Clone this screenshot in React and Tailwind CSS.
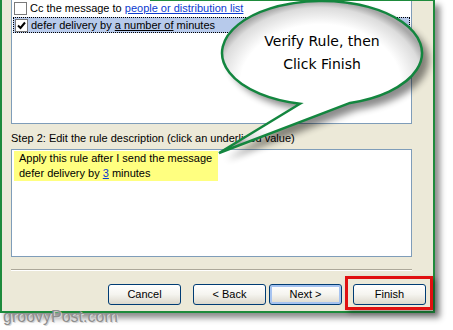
import React from 'react';

const Box = ({ checked }) => (
  <span className="w-[13px] h-[13px] shrink-0 border border-[#7a7a7a] bg-white flex items-center justify-center">
    {checked && (
      <svg width="11" height="11" viewBox="0 0 11 11">
        <path d="M2 5.5 L4.5 8 L9 2.5" fill="none" stroke="#000" strokeWidth="2" />
      </svg>
    )}
  </span>
);

const Btn = ({ label, focus }) => (
  <div
    className={`w-[73px] h-[21px] rounded-[3px] border border-[#003C74] bg-gradient-to-b from-white via-[#F5F4EF] to-[#DCD8CC] flex items-center justify-center text-[11px] text-black ${
      focus ? 'shadow-[inset_0_0_0_2px_#A6C3F0]' : ''
    }`}
  >
    {label}
  </div>
);

export default function App() {
  return (
    <div
      className="relative w-[453px] h-[330px] bg-white overflow-hidden"
      style={{ fontFamily: '"Liberation Sans", Arial, sans-serif' }}
    >
      {/* dialog */}
      <div className="w-[435px] h-[313px] bg-[#ECE9D8] border-l-2 border-r-2 border-b-2 border-[#1E8B3C] shadow-[5px_5px_6px_rgba(0,0,0,0.45)] flex flex-col pl-[9px] text-[11px] text-black">
        {/* step 1 list */}
        <div className="w-[401px] h-[124px] bg-white border-x border-b border-[#7F9DB9] px-px">
          <div className="h-[17px] flex items-center pl-px gap-[3px]">
            <Box />
            <span>
              Cc the message to{' '}
              <span className="text-[#0B3BCF] underline">people or distribution list</span>
            </span>
          </div>
          <div className="h-[16px] flex items-center pl-px gap-[3px] bg-[#B7CAEB] border border-dotted border-black">
            <Box checked />
            <span>
              defer delivery by <span className="underline">a number of</span> minutes
            </span>
          </div>
        </div>

        {/* step 2 */}
        <div className="mt-[8px] h-[13px] leading-[13px]">
          Step 2: Edit the rule description (click an underlined value)
        </div>
        <div className="mt-[4px] w-[401px] h-[108px] bg-white border border-[#7F9DB9] pl-[2px] pt-px">
          <div className="w-[204px] h-[30px] bg-[#FFFF80] pl-[5px] leading-[15px]">
            <div>Apply this rule after I send the message</div>
            <div>
              defer delivery by <span className="text-[#0B3BCF] underline">3</span> minutes
            </div>
          </div>
        </div>

        {/* separator */}
        <div className="mt-[12px] w-[401px] border-t border-[#ACA899] border-b border-b-white" />

        {/* buttons */}
        <div className="mt-[13px] flex justify-end pr-[7px]">
          <Btn label="Cancel" />
          <div className="ml-[12px]">
            <Btn label="< Back" />
          </div>
          <div className="ml-[3px]">
            <Btn label="Next >" focus />
          </div>
          <div className="ml-[11px]">
            <Btn label="Finish" />
          </div>
        </div>
      </div>

      {/* watermark */}
      <div className="-mt-[4px] ml-[3px] text-[16px] leading-[16px] text-[#8E8E8E] [text-shadow:1px_1px_0_#d8d8d8]">
        groovyPost.com
      </div>

      {/* partial top edge of frame */}
      <div className="absolute top-0 left-[150px] w-[285px] h-px bg-[#1E8B3C]" />

      {/* red highlight around Finish */}
      <div className="absolute left-[345px] top-[276px] w-[88px] h-[34px] border-[3px] border-[#E01010] shadow-[3px_3px_5px_rgba(0,0,0,0.35)]" />

      {/* speech bubble */}
      <svg className="absolute left-0 top-0 pointer-events-none" width="453" height="330" viewBox="0 0 453 330">
        <defs>
          <radialGradient id="bf" cx="0.5" cy="0.55" r="0.55">
            <stop offset="0" stopColor="#ffffff" />
            <stop offset="0.72" stopColor="#ffffff" />
            <stop offset="0.92" stopColor="#dcdcdc" />
            <stop offset="1" stopColor="#a8a8a8" />
          </radialGradient>
          <filter id="bs" x="-20%" y="-20%" width="140%" height="140%">
            <feGaussianBlur stdDeviation="3.5" />
          </filter>
        </defs>
        <path
          d="M 300 103.7 L 219 153 L 350 102.9 A 100 52 0 1 0 300 103.7 Z"
          fill="#000"
          opacity="0.45"
          transform="translate(7 7)"
          filter="url(#bs)"
        />
        <path
          d="M 300 103.7 L 219 153 L 350 102.9 A 100 52 0 1 0 300 103.7 Z"
          fill="url(#bf)"
          stroke="#13863F"
          strokeWidth="2.5"
          strokeLinejoin="miter"
        />
      </svg>
      <div
        className="absolute left-[222px] top-[30px] w-[200px] text-center text-[14px] leading-[23px] text-black"
        style={{ fontFamily: '"DejaVu Sans", sans-serif' }}
      >
        <div>Verify Rule, then</div>
        <div>Click Finish</div>
      </div>
    </div>
  );
}
